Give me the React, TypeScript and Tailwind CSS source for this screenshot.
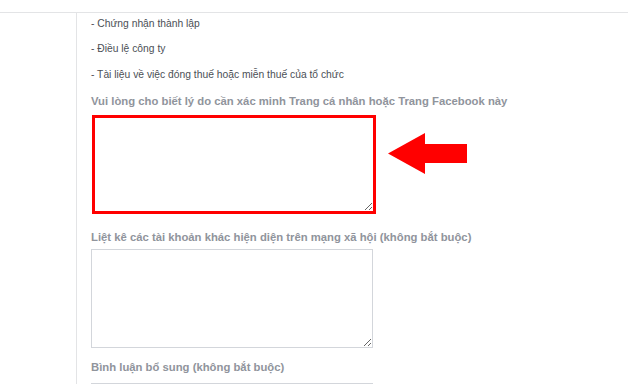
export default function App() {
  return (
    <div className="w-[628px] h-[384px] overflow-hidden bg-white font-['Liberation_Sans',Arial,sans-serif]">
      {/* top strip */}
      <div className="h-[13px] border-b border-[#e3e4e6]" />
      <div className="flex h-[371px]">
        <div className="w-[77px] shrink-0 border-r border-[#e3e4e6]" />
        <div className="pl-[14px] pt-[4px]">
          <p className="text-[10.3px] leading-[14px] text-[#4b4f56]">- Chứng nhận thành lập</p>
          <p className="mt-[11px] text-[10.3px] leading-[14px] text-[#4b4f56]">- Điều lệ công ty</p>
          <p className="mt-[12px] text-[10.3px] leading-[14px] text-[#4b4f56]">- Tài liệu về việc đóng thuế hoặc miễn thuế của tổ chức</p>

          <label className="block mt-[12px] text-[11.3px] leading-[14px] font-bold text-[#90949c]">
            Vui lòng cho biết lý do cần xác minh Trang cá nhân hoặc Trang Facebook này
          </label>
          <div className="flex items-start mt-[7px]">
            <textarea className="block ml-[1px] w-[284px] h-[99px] border-[3px] border-[#ff0000] bg-white outline-none" />
            {/* annotation arrow */}
            <svg className="ml-[12px] mt-[18px]" width="80" height="42" viewBox="0 0 80 42">
              <polygon points="0,20.5 37,0 37,11 79,11 79,30 37,30 37,41" fill="#ff0000" />
            </svg>
          </div>

          <label className="block mt-[16px] text-[11.3px] leading-[14px] font-bold text-[#90949c]">
            Liệt kê các tài khoản khác hiện diện trên mạng xã hội (không bắt buộc)
          </label>
          <textarea className="block mt-[5px] w-[282px] h-[99px] border border-[#d3d6db] bg-white outline-none" />

          <label className="block mt-[12px] text-[11.3px] leading-[14px] font-bold text-[#90949c]">
            Bình luận bổ sung (không bắt buộc)
          </label>
          <textarea className="block mt-[9px] w-[282px] h-[99px] border border-[#d3d6db] bg-white outline-none" />
        </div>
      </div>
    </div>
  );
}
